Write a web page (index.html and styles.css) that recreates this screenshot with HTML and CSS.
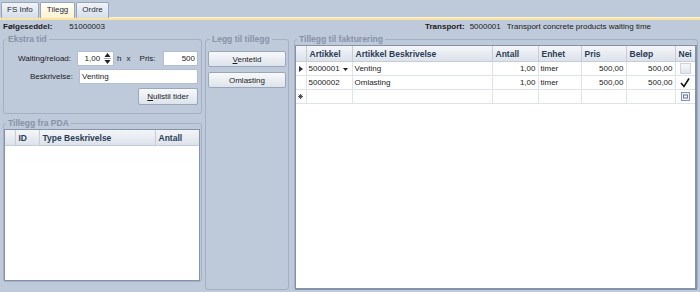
FILE: index.html
```html
<!DOCTYPE HTML>
<html>
<head>
<title>Tillegg</title>
<link rel="stylesheet" href="styles.css">
</head>
<body>
    <div class="tabs">
        <div class="tab">FS Info</div>
        <div class="tab active">Tilegg</div>
        <div class="tab">Ordre</div>
    </div>
    <div class="tabline"></div>

    <div class="info">
        <span class="key">Følgeseddel:</span>
        <span class="fsnr">51000003</span>
        <span class="spacer"></span>
        <span class="key">Transport:</span>
        <span class="trnr">5000001</span>
        <span>Transport concrete products waiting time</span>
    </div>

    <div class="main">
        <div class="leftcol">
            <fieldset class="grp extra">
                <legend>Ekstra tid</legend>
                <div class="row">
                    <span class="lbl">Waiting/reload:</span>
                    <div class="input spin">
                        <span class="val">1,00</span>
                        <svg class="arrows" width="7" height="13" viewBox="0 0 7 13">
                            <path d="M3.5 1 L6.5 5 L0.5 5 Z" fill="#222"/>
                            <line x1="0" y1="6.5" x2="7" y2="6.5" stroke="#9aa6b8" stroke-width="1"/>
                            <path d="M0.5 8 L6.5 8 L3.5 12 Z" fill="#222"/>
                        </svg>
                    </div>
                    <span class="unit">h</span>
                    <span class="unit x">x</span>
                    <span class="pris-lbl">Pris:</span>
                    <div class="input pris">500</div>
                </div>
                <div class="row">
                    <span class="lbl">Beskrivelse:</span>
                    <div class="input besk">Venting</div>
                </div>
                <div class="row right">
                    <button class="btn reset"><u>N</u>ullstil tider</button>
                </div>
            </fieldset>

            <fieldset class="grp pda">
                <legend>Tillegg fra PDA</legend>
                <div class="grid">
                    <table>
                        <colgroup>
                            <col style="width:10px"><col style="width:24px"><col style="width:116px"><col>
                        </colgroup>
                        <tr class="head">
                            <th></th><th>ID</th><th>Type Beskrivelse</th><th>Antall</th>
                        </tr>
                    </table>
                </div>
            </fieldset>
        </div>

        <fieldset class="grp legg">
            <legend>Legg til tillegg</legend>
            <button class="btn wide"><u>V</u>entetid</button>
            <button class="btn wide">Omlasting</button>
        </fieldset>

        <fieldset class="grp fakt">
            <legend>Tillegg til fakturering</legend>
            <div class="grid">
                <table>
                    <colgroup>
                        <col style="width:10px"><col style="width:46px"><col style="width:140px"><col style="width:46px">
                        <col style="width:43px"><col style="width:45px"><col style="width:49px"><col>
                    </colgroup>
                    <tr class="head">
                        <th></th><th>Artikkel</th><th>Artikkel Beskrivelse</th><th>Antall</th>
                        <th>Enhet</th><th>Pris</th><th>Beløp</th><th>Nei</th>
                    </tr>
                    <tr>
                        <td class="ind">
                            <svg width="4" height="6" viewBox="0 0 4 6"><path d="M0 0 L4 3 L0 6 Z" fill="#333"/></svg>
                        </td>
                        <td class="art">5000001
                            <svg class="drop" width="5" height="3" viewBox="0 0 5 3"><path d="M0 0 L5 0 L2.5 3 Z" fill="#222"/></svg>
                        </td>
                        <td>Venting</td>
                        <td class="num">1,00</td>
                        <td>timer</td>
                        <td class="num">500,00</td>
                        <td class="num">500,00</td>
                        <td class="chk"><span class="box"></span></td>
                    </tr>
                    <tr>
                        <td class="ind"></td>
                        <td>5000002</td>
                        <td>Omlasting</td>
                        <td class="num">1,00</td>
                        <td>timer</td>
                        <td class="num">500,00</td>
                        <td class="num">500,00</td>
                        <td class="chk">
                            <svg width="10" height="10" viewBox="0 0 10 10"><path d="M1 5 L4 8.5 L9 0.5" fill="none" stroke="#111" stroke-width="1.6"/></svg>
                        </td>
                    </tr>
                    <tr>
                        <td class="ind">
                            <svg width="5" height="5" viewBox="0 0 5 5"><path d="M2.5 0 V5 M0 2.5 H5 M0.7 0.7 L4.3 4.3 M4.3 0.7 L0.7 4.3" stroke="#445" stroke-width="0.9"/></svg>
                        </td>
                        <td></td><td></td><td></td><td></td><td></td><td></td>
                        <td class="chk">
                            <svg width="9" height="9" viewBox="0 0 9 9"><rect x="0.5" y="0.5" width="8" height="8" fill="#eef1f5" stroke="#8795ab"/><rect x="2.5" y="3" width="4" height="3" fill="none" stroke="#6d7c94"/></svg>
                        </td>
                    </tr>
                </table>
            </div>
        </fieldset>
    </div>
</body>
</html>
```

FILE: styles.css
```css
 html, body {
     margin: 0;
     padding: 0;
 }

 body {
     width: 700px;
     height: 292px;
     overflow: hidden;
     background: #bec9da;
     font-family: "Liberation Sans", Arial, sans-serif;
     font-size: 8px;
     color: #1b1b1b;
 }

 /* tabs */
 .tabs {
     display: flex;
     height: 17px;
     padding-left: 1px;
     box-sizing: border-box;
     padding-top: 2px;
 }

 .tab {
     height: 15px;
     line-height: 14px;
     padding: 0 5px;
     margin-right: 1px;
     border: 1px solid #97a5ba;
     border-bottom: 0;
     border-radius: 2px 2px 0 0;
     background: linear-gradient(#f1f4f8, #d5dde8);
     color: #1f2b3d;
     font-size: 8px;
 }

 .tab.active {
     padding: 0 6px;
     background: linear-gradient(#fffef8, #fdf1cf);
 }

 .tabline {
     height: 2px;
     background: #f8e3a0;
     border-top: 1px solid #fdf3cf;
 }

 /* header info */
 .info {
     display: flex;
     height: 14px;
     line-height: 14px;
     padding: 0 49px 0 3px;
 }

 .key {
     font-weight: bold;
 }

 .fsnr {
     margin-left: 17px;
 }

 .spacer {
     flex: 1;
 }

 .trnr {
     margin: 0 6px 0 5px;
 }

 /* layout */
 .main {
     display: flex;
     align-items: flex-start;
 }

 .leftcol {
     display: flex;
     flex-direction: column;
     width: 199px;
     margin-left: 3px;
 }

 .grp {
     margin: 0;
     padding: 0;
     border: 1px solid #a3afc3;
     border-radius: 3px;
     box-sizing: border-box;
     min-width: 0;
 }

 .grp legend {
     margin-left: 2px;
     padding: 0 2px;
     font-weight: bold;
     font-size: 8.5px;
     line-height: 11px;
     color: #8793a7;
 }

 /* ekstra tid */
 .extra {
     height: 80px;
     padding: 6px 3px 0 0;
 }

 .row {
     display: flex;
     align-items: center;
     height: 15px;
     margin-bottom: 3px;
 }

 .row.right {
     justify-content: flex-end;
     height: 17px;
 }

 .lbl {
     width: 69px;
     text-align: right;
     margin-right: 6px;
 }

 .input {
     height: 15px;
     line-height: 13px;
     box-sizing: border-box;
     border: 1px solid #b3bfd0;
     background: #fff;
     padding: 0 2px;
 }

 .spin {
     display: flex;
     align-items: center;
     width: 38px;
 }

 .spin .val {
     flex: 1;
     text-align: right;
     padding-right: 4px;
 }

 .unit {
     margin-left: 3px;
 }

 .unit.x {
     margin-left: 5px;
 }

 .pris-lbl {
     margin-left: 9px;
     width: 24px;
 }

 .pris {
     width: 36px;
     text-align: right;
 }

 .besk {
     width: 119px;
 }

 .btn {
     height: 17px;
     padding: 0;
     border: 1px solid #9aa7bb;
     border-radius: 2px;
     background: linear-gradient(#f7f9fb, #dde3eb);
     font-family: "Liberation Sans", Arial, sans-serif;
     font-size: 8px;
     color: #1b1b1b;
 }

 .reset {
     width: 60px;
     margin-top: 1px;
 }

 /* PDA */
 .pda {
     height: 164px;
     margin-top: 4px;
     padding: 0 1px 1px 0;
 }

 .grid {
     box-sizing: border-box;
     background: #fff;
     border: 1px solid #8593a9;
     overflow: hidden;
 }

 .pda .grid {
     height: 152px;
 }

 table {
     width: 100%;
     border-collapse: collapse;
     table-layout: fixed;
 }

 th {
     height: 15px;
     padding: 0 3px;
     text-align: left;
     font-weight: bold;
     font-size: 8.5px;
     color: #2b3c56;
     background: linear-gradient(#f3f5f8, #dce2ea);
     border-right: 1px solid #c4cdd9;
     border-bottom: 1px solid #c4cdd9;
 }

 th:last-child {
     border-right: 0;
 }

 td {
     height: 13px;
     padding: 0 2px;
     border-right: 1px solid #dde3ea;
     border-bottom: 1px solid #dde3ea;
     white-space: nowrap;
     overflow: hidden;
 }

 td:last-child {
     border-right: 0;
 }

 td.num {
     text-align: right;
 }

 td.ind {
     padding: 0;
     text-align: center;
 }

 td.art {
     position: relative;
 }

 .drop {
     position: absolute;
     right: 4px;
     top: 6px;
 }

 td.chk {
     padding: 0;
     text-align: center;
     vertical-align: middle;
 }

 td.chk svg, td.ind svg {
     display: block;
     margin: 0 auto;
 }

 .box {
     display: block;
     width: 11px;
     height: 11px;
     margin: 0 auto;
     box-sizing: border-box;
     border: 1px solid #cdd4de;
     background: linear-gradient(#f6f7f9, #e0e5ec);
 }

 /* legg til */
 .legg {
     width: 84px;
     height: 256px;
     margin-left: 3px;
     padding: 6px 2px 0 2px;
 }

 .btn.wide {
     display: block;
     width: 78px;
     height: 16px;
     margin-bottom: 5px;
 }

 /* fakturering */
 .fakt {
     width: 404px;
     height: 256px;
     margin-left: 5px;
     padding: 0;
 }

 .fakt .grid {
     border-width: 1px 2px 2px 1px;
     height: 245px;
 }
```
